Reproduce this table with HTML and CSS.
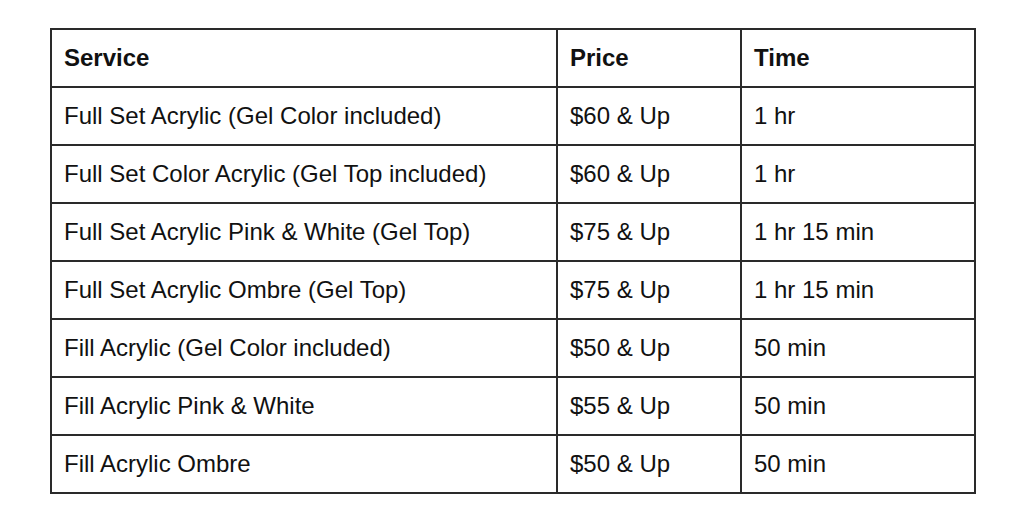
FILE: index.html
```html
<!DOCTYPE html>
<html>
<head>
<meta charset="utf-8">
<link rel="stylesheet" href="styles.css">
</head>
<body>
<div class="page">
<table class="menu">
<colgroup><col class="c1"><col class="c2"><col class="c3"></colgroup>
<thead>
<tr><th>Service</th><th>Price</th><th>Time</th></tr>
</thead>
<tbody>
<tr><td>Full Set Acrylic (Gel Color included)</td><td>$60 &amp; Up</td><td>1 hr</td></tr>
<tr><td>Full Set Color Acrylic (Gel Top included)</td><td>$60 &amp; Up</td><td>1 hr</td></tr>
<tr><td>Full Set Acrylic Pink &amp; White (Gel Top)</td><td>$75 &amp; Up</td><td>1 hr 15 min</td></tr>
<tr><td>Full Set Acrylic Ombre (Gel Top)</td><td>$75 &amp; Up</td><td>1 hr 15 min</td></tr>
<tr><td>Fill Acrylic (Gel Color included)</td><td>$50 &amp; Up</td><td>50 min</td></tr>
<tr><td>Fill Acrylic Pink &amp; White</td><td>$55 &amp; Up</td><td>50 min</td></tr>
<tr><td>Fill Acrylic Ombre</td><td>$50 &amp; Up</td><td>50 min</td></tr>
</tbody>
</table>
</div>
</body>
</html>
```
FILE: styles.css
```css
html, body {
  margin: 0;
  padding: 0;
  background: #ffffff;
}
.page {
  padding: 28px 0 0 50px;
}
.menu {
  border-collapse: collapse;
  table-layout: fixed;
  width: 924px;
  font-family: "Liberation Sans", Arial, sans-serif;
  font-size: 24px;
  color: #111111;
}
.c1 { width: 506px; }
.c2 { width: 184px; }
.c3 { width: 234px; }
.menu th, .menu td {
  border: 2px solid #2a2a2a;
  height: 56px;
  padding: 0 12px;
  text-align: left;
  vertical-align: middle;
  white-space: nowrap;
}
.menu th {
  font-weight: bold;
}
```
